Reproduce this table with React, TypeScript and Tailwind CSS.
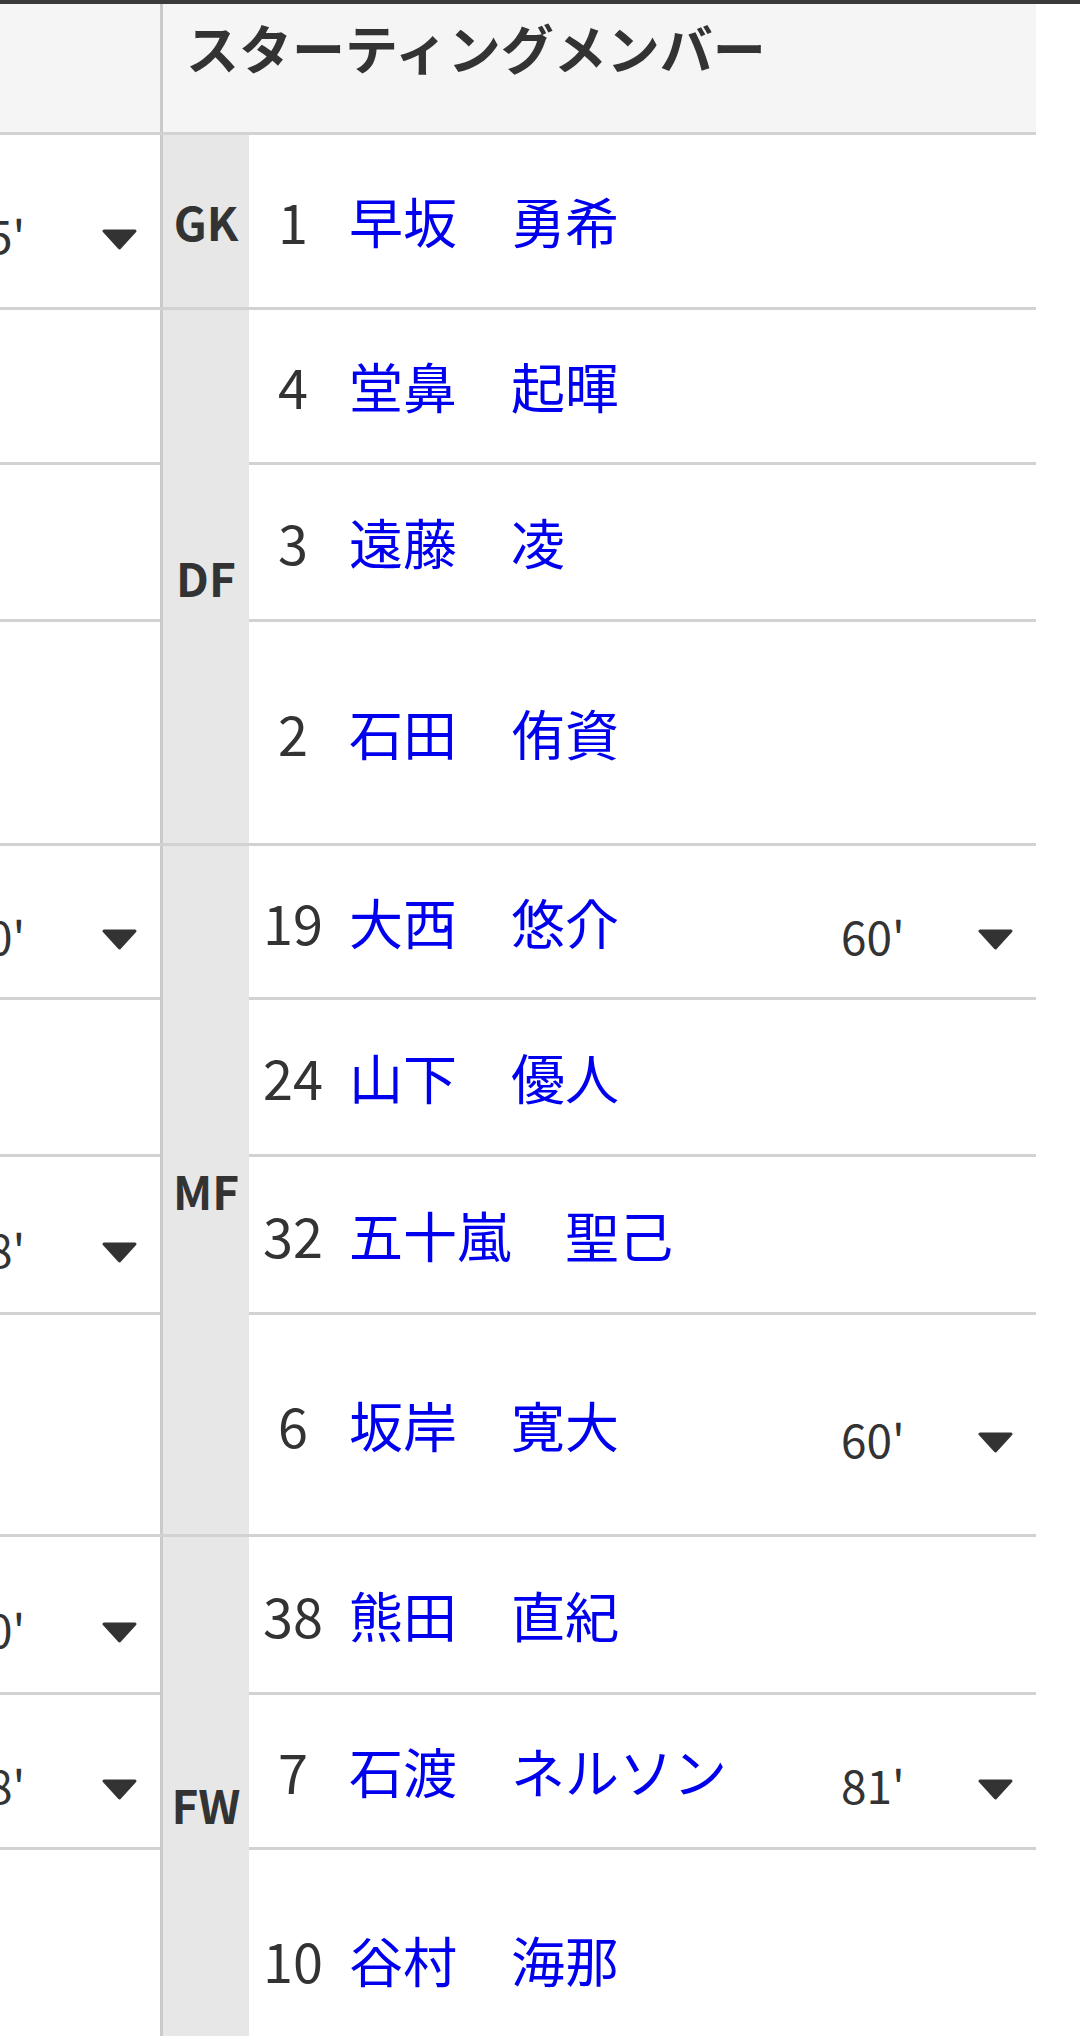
import React from "react";

type Row = {
  h: string;
  num: string;
  name: string;
  time?: string;
  left?: string;
};

type Group = { pos: string; rows: Row[] };

const groups: Group[] = [
  { pos: "GK", rows: [{ h: "h-[172px]", num: "1", name: "早坂　勇希", left: "5'" }] },
  {
    pos: "DF",
    rows: [
      { h: "h-[152px]", num: "4", name: "堂鼻　起暉" },
      { h: "h-[154px]", num: "3", name: "遠藤　凌" },
      { h: "h-[221px]", num: "2", name: "石田　侑資" },
    ],
  },
  {
    pos: "MF",
    rows: [
      { h: "h-[151px]", num: "19", name: "大西　悠介", time: "60'", left: "0'" },
      { h: "h-[154px]", num: "24", name: "山下　優人" },
      { h: "h-[155px]", num: "32", name: "五十嵐　聖己", left: "8'" },
      { h: "h-[219px]", num: "6", name: "坂岸　寛大", time: "60'" },
    ],
  },
  {
    pos: "FW",
    rows: [
      { h: "h-[155px]", num: "38", name: "熊田　直紀", left: "0'" },
      { h: "h-[152px]", num: "7", name: "石渡　ネルソン", time: "81'", left: "8'" },
      { h: "h-[220px]", num: "10", name: "谷村　海那" },
    ],
  },
];

const font = { fontFamily: '"Noto Sans CJK JP", "Noto Sans", sans-serif' };

function Caret() {
  return (
    <svg width="35" height="21" viewBox="0 0 35 21" className="block">
      <polygon
        points="2,2 33,2 17.5,19"
        fill="#333333"
        stroke="#333333"
        strokeWidth="3"
        strokeLinejoin="round"
      />
    </svg>
  );
}

function TimeCell({ text, clipped }: { text: string; clipped?: boolean }) {
  return (
    <>
      <div
        className={`w-[140px] shrink-0 self-stretch flex items-center pt-[26px] text-[46px] leading-none text-[#333333] ${
          clipped ? "pl-[25px]" : "pl-[3px]"
        }`}
      >
        {text}
      </div>
      <div className="w-[35px] shrink-0 self-stretch flex items-center pt-[36px]">
        <Caret />
      </div>
    </>
  );
}

export default function App() {
  return (
    <div className="w-[1080px] min-h-[2036px] bg-white overflow-hidden" style={font}>
      <div className="w-full h-[4px] bg-[#3a3a3a]" />
      <div className="w-[1036px] flex bg-[#f5f5f5] border-b-[3px] border-[#d2d2d2]">
        <div className="w-[160px] h-[128px] shrink-0" />
        <div className="flex-1 h-[128px] border-l-[3px] border-[#cacaca] pl-[23px] pt-[17px]">
          <div className="text-[53px] leading-none font-bold text-[#333333]">
            スターティングメンバー
          </div>
        </div>
      </div>
      {groups.map((g) => (
        <div key={g.pos} className="w-[1036px] flex border-b-[3px] border-[#d2d2d2]">
          <div className="w-[160px] shrink-0 flex flex-col">
            {g.rows.map((r, i) => (
              <div
                key={i}
                className={i < g.rows.length - 1 ? "border-b-[3px] border-[#d2d2d2]" : ""}
              >
                <div className={`${r.h} flex justify-end pr-[23px] overflow-hidden`}>
                  {r.left ? <TimeCell text={r.left} clipped /> : null}
                </div>
              </div>
            ))}
          </div>
          <div className="flex-1 flex border-l-[3px] border-[#cacaca]">
            <div className="w-[86px] shrink-0 bg-[#e7e7e7] flex items-center justify-center text-[46px] leading-none font-bold text-[#333333]">
              {g.pos}
            </div>
            <div className="flex-1 flex flex-col">
              {g.rows.map((r, i) => (
                <div
                  key={i}
                  className={i < g.rows.length - 1 ? "border-b-[3px] border-[#d2d2d2]" : ""}
                >
                  <div className={`${r.h} flex items-center`}>
                    <div className="w-[88px] shrink-0 text-center text-[54px] leading-none text-[#333333]">
                      {r.num}
                    </div>
                    <div className="flex-1 pl-[12px] text-[54px] leading-none text-[#0000ee] whitespace-nowrap">
                      {r.name}
                    </div>
                    {r.time ? (
                      <TimeCell text={r.time} />
                    ) : null}
                    <div className="w-[23px] shrink-0" />
                  </div>
                </div>
              ))}
            </div>
          </div>
        </div>
      ))}
    </div>
  );
}
